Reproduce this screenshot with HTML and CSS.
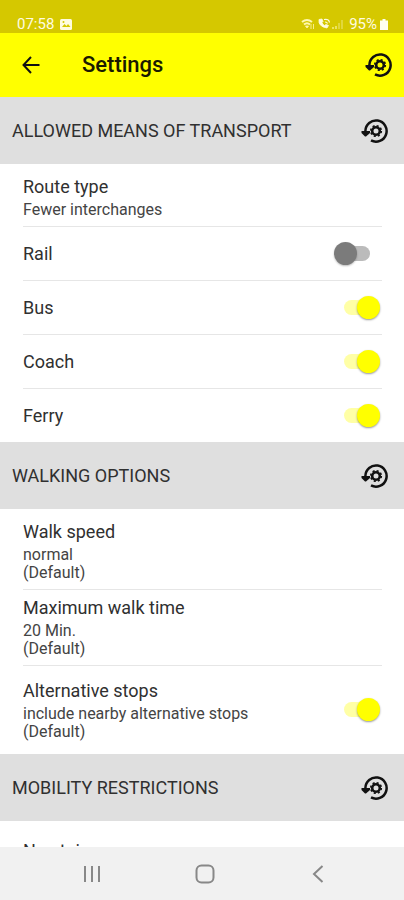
FILE: index.html
```html
<!DOCTYPE html>
<html lang="en">
<head>
<meta charset="utf-8">
<meta name="viewport" content="width=device-width, initial-scale=1">
<title>Settings</title>
<link rel="stylesheet" href="styles.css">
</head>
<body>
<svg class="defs" aria-hidden="true">
  <symbol id="reset" viewBox="0 0 28 24">
    <path d="M5.4 13V12A10.6 10.6 0 1 1 11 21.4" fill="none" stroke="currentColor" stroke-width="2.5"/>
    <path d="M1.500 12h8.500v2L6 17.600h-1L1.500 14z" fill="currentColor"/>
    <circle cx="16" cy="12" r="3.8" fill="none" stroke="currentColor" stroke-width="2.6"/>
    <circle cx="16" cy="12" r="5.3" fill="none" stroke="currentColor" stroke-width="1.6" stroke-dasharray="2.1 2.06"/>
  </symbol>
</svg>
<div class="screen">
  <div class="status">
    <span>07:58</span>
    <svg class="photo" viewBox="0 0 12 11" width="12" height="11"><rect width="12" height="11" rx="1.5" fill="#fffce0"/><path d="M2 8l2.5-3 2 2 1.5-2L10.500 8z" fill="#d5c800"/><circle cx="3.500" cy="3" r="1" fill="#d5c800"/></svg>
    <svg class="signals" viewBox="0 0 44 12" width="44" height="12">
      <path d="M1 4q5-4 10 0M3 6.500q3-2.500 6 0" fill="none" stroke="#fff8b0" stroke-width="2"/>
      <path d="M4.500 8h3L6 10zM10 6v5M12.500 6v5" fill="#fff8b0" stroke="#fff8b0" stroke-width=".8"/>
      <path d="M18 1.500q-1 7 8 8.500l1.500-2.500-2.500-1-1.500 1q-2-1-2.500-3l1-1L21 1z" fill="#fffce0" stroke="#fffce0" stroke-width=".8"/>
      <path d="M23 1.500q5-1 5.500 3M24 4q2 0 2.500 1.500" fill="none" stroke="#fffce0" stroke-width="1.200"/>
      <path d="M32 11V9M35 11V8" stroke="#f4eb80" stroke-width="1.500"/><path d="M38 11V5M41 11V2" stroke="#e5db50" stroke-width="1.500"/>
    </svg>
    <span>95%</span>
    <svg viewBox="0 0 8 11" width="8" height="11"><path d="M2.500 0h3v1.500H8V11H0V1.500h2.500z" fill="#fffff0"/></svg>
  </div>
  <header class="appbar">
    <button class="icon" aria-label="Back"><svg viewBox="0 0 18 18" width="18" height="18"><path d="M17.500 9H1.500M9 1L1.500 9 9 17" fill="none" stroke="currentColor" stroke-width="2"/></svg></button>
    <h1>Settings</h1>
    <button class="icon" aria-label="Reset all settings"><svg width="28" height="24"><use href="#reset"/></svg></button>
  </header>
  <main>
    <section>
      <div class="head"><h2>ALLOWED MEANS OF TRANSPORT</h2><button class="icon" aria-label="Reset transport"><svg width="28" height="24"><use href="#reset"/></svg></button></div>
      <div class="list">
        <button class="row detail lead"><span class="title">Route type</span><span class="sub">Fewer interchanges</span></button>
        <label class="row toggle"><span class="title">Rail</span><input type="checkbox" role="switch"></label>
        <label class="row toggle"><span class="title">Bus</span><input type="checkbox" role="switch" checked></label>
        <label class="row toggle"><span class="title">Coach</span><input type="checkbox" role="switch" checked></label>
        <label class="row toggle"><span class="title">Ferry</span><input type="checkbox" role="switch" checked></label>
      </div>
    </section>
    <section>
      <div class="head"><h2>WALKING OPTIONS</h2><button class="icon" aria-label="Reset walking options"><svg width="28" height="24"><use href="#reset"/></svg></button></div>
      <div class="list">
        <button class="row detail lead"><span class="title">Walk speed</span><span class="sub">normal<br>(Default)</span></button>
        <button class="row detail"><span class="title">Maximum walk time</span><span class="sub">20 Min.<br>(Default)</span></button>
        <label class="row toggle tall"><span><span class="title">Alternative stops</span><span class="sub">include nearby alternative stops<br>(Default)</span></span><input type="checkbox" role="switch" checked></label>
      </div>
    </section>
    <section>
      <div class="head"><h2>MOBILITY RESTRICTIONS</h2><button class="icon" aria-label="Reset mobility restrictions"><svg width="28" height="24"><use href="#reset"/></svg></button></div>
      <div class="list">
        <button class="row detail low"><span class="title">No stairs</span></button>
      </div>
    </section>
  </main>
  <nav class="nav" aria-label="System">
    <button class="icon" aria-label="Recent apps"><svg viewBox="0 0 20 20" width="20" height="20"><path d="M3 2v16M10 2v16M17 2v16" stroke="currentColor" stroke-width="2"/></svg></button>
    <button class="icon" aria-label="Home"><svg viewBox="0 0 20 20" width="20" height="20"><rect x="1.500" y="1.500" width="17" height="17" rx="5" fill="none" stroke="currentColor" stroke-width="2"/></svg></button>
    <button class="icon" aria-label="Back"><svg viewBox="0 0 20 20" width="20" height="20"><path d="M14.500 2L6 10l8.500 8" fill="none" stroke="currentColor" stroke-width="2"/></svg></button>
  </nav>
</div>
</body>
</html>
```
FILE: styles.css
```css
* { box-sizing: border-box; }
body { margin: 0; font-family: Roboto, "Liberation Sans", sans-serif; color: #303030; background: #fff; }
.defs { position: absolute; width: 0; height: 0; }
h1, h2 { margin: 0; }
button { border: 0; padding: 0; background: none; font: inherit; color: inherit; text-align: left; }
svg { display: block; }
.icon { color: #111; }
.screen { display: flex; flex-direction: column; height: 100vh; overflow: hidden; }

.status { display: flex; align-items: center; flex: none; padding: 15px 16px 0 17px; height: 33px; background: #d5c800; color: #fffce0; font-size: 15px; line-height: 18px; }
.photo { margin-left: 6px; }
.signals { margin: 0 4px 0 auto; }
.status svg:last-child { margin-left: 3px; }

.appbar { display: flex; align-items: center; flex: none; height: 64px; padding: 0 12px 0 22px; background: #ff0; }
.appbar h1 { flex: 1; margin-left: 42px; font-size: 22px; line-height: 28px; font-weight: 500; color: #1a1a00; }

main { flex: 1; min-height: 0; overflow: hidden; }
.head { display: flex; align-items: center; justify-content: space-between; height: 67px; padding: 0 16px 0 12px; background: #dfdfdf; }
.head h2 { font-size: 18px; line-height: 24px; font-weight: 400; }

.list { padding: 0 22px 0 23px; }
.row { display: block; width: 100%; border-bottom: 1px solid #e6e6e6; }
.detail { padding: 6px 0 7px; }
.lead { padding-top: 11px; }
.low { padding-top: 18px; }
.toggle { display: flex; align-items: center; justify-content: space-between; height: 54px; padding-right: 2px; }
.toggle:last-child { height: 53px; border-bottom: 0; }
.tall:last-child { height: 88px; }
.title { display: block; font-size: 18px; line-height: 24px; }
.sub { display: block; margin-top: 2px; font-size: 16px; line-height: 18px; color: #444; }

input { appearance: none; position: relative; flex: none; width: 46px; height: 24px; margin: 0; }
input::before { content: ""; position: absolute; left: 10px; top: 4px; width: 26px; height: 15px; border-radius: 8px; background: #bbb; }
input::after { content: ""; position: absolute; left: 0; top: 0; width: 23px; height: 23px; border-radius: 50%; background: #7b7b7b; box-shadow: 0 1px 2px #0004; }
input:checked::before { background: #ffffa6; }
input:checked::after { left: 23px; background: #ff0; box-shadow: 0 1px 2px #0006; }

.nav { display: flex; align-items: center; justify-content: space-between; flex: none; height: 53px; padding: 0 76px 0 82px; background: #f1f1f1; }
.nav .icon { color: #888; }
```
